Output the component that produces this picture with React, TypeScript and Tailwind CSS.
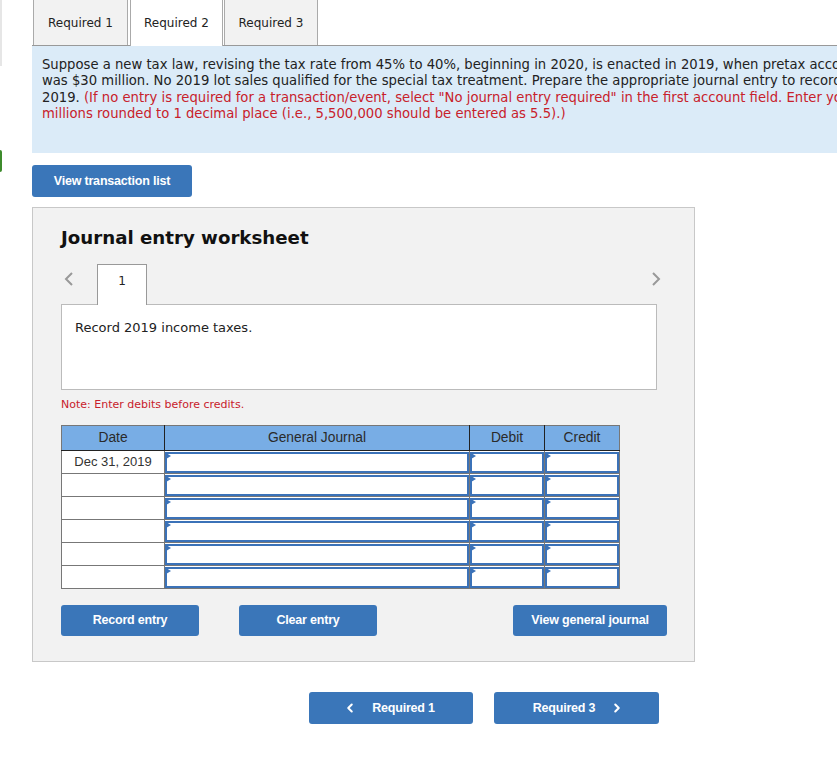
import { ChevronLeft, ChevronRight } from "lucide-react";

const verdana = { fontFamily: '"DejaVu Sans", Verdana, sans-serif' };
const arial = { fontFamily: '"Liberation Sans", Arial, sans-serif' };

function BlueButton({ children, className }: { children: React.ReactNode; className: string }) {
  return (
    <button
      style={arial}
      className={
        "flex items-center justify-center rounded-[3px] bg-[#3a76b9] text-[12.5px] font-bold tracking-[-0.2px] text-white " +
        className
      }
    >
      {children}
    </button>
  );
}

function InputCell() {
  return (
    <td className="h-[23px] border border-[#777] bg-white p-0">
      <div className="relative h-[21px] border-2 border-[#3b72b8] bg-white">
        <span className="absolute left-[-1px] top-[-1px] h-0 w-0 border-y-[3px] border-l-[5px] border-y-transparent border-l-[#3b72b8]" />
      </div>
    </td>
  );
}

export default function App() {
  const rows = ["Dec 31, 2019", "", "", "", "", ""];

  return (
    <div className="flex h-[762px] w-[837px] overflow-hidden bg-white text-[#222]">
      {/* left edge gutter */}
      <div className="flex w-[32px] shrink-0 flex-col">
        <div className="h-[66px] w-[2px] bg-[#e6e6e6]" />
        <div className="mt-[84px] h-[22px] w-[2px] rounded-r bg-[#3d8b2c]" />
      </div>

      <div className="min-w-0 flex-1">
        {/* tabs */}
        <div style={verdana} className="flex h-[46px] w-[900px] border-b border-[#999] text-[12px]">
          <div className="ml-px flex w-[95px] items-center justify-center border-x border-[#aaa] bg-[#f2f2f2]">
            Required 1
          </div>
          <div className="relative z-10 -mb-px ml-[2px] flex w-[93px] items-center justify-center border-x border-[#aaa] bg-white">
            Required 2
          </div>
          <div className="ml-[1px] flex w-[94px] items-center justify-center border-x border-[#aaa] bg-[#f2f2f2]">
            Required 3
          </div>
        </div>

        {/* question */}
        <div
          style={verdana}
          className="h-[107px] w-[900px] whitespace-nowrap bg-[#dbebf8] pl-[10px] pt-[11px] text-[13.2px] leading-[16.3px]"
        >
          <div>
            Suppose a new tax law, revising the tax rate from 45% to 40%, beginning in 2020, is enacted in 2019, when pretax accounting income
          </div>
          <div>
            was $30 million. No 2019 lot sales qualified for the special tax treatment. Prepare the appropriate journal entry to record income taxes in
          </div>
          <div>
            2019.{" "}
            <span className="text-[#c8212b]">
              (If no entry is required for a transaction/event, select "No journal entry required" in the first account field. Enter your answers in
            </span>
          </div>
          <div className="text-[#c8212b]">
            millions rounded to 1 decimal place (i.e., 5,500,000 should be entered as 5.5).)
          </div>
        </div>

        <BlueButton className="mt-[12px] h-[32px] w-[160px]">View transaction list</BlueButton>

        {/* worksheet */}
        <div className="mt-[10px] h-[455px] w-[663px] border border-[#c8c8c8] bg-[#f2f2f2] pl-[28px]">
          <h2 style={verdana} className="pt-[18px] text-[18.2px] font-bold leading-[24px] text-[#111]">
            Journal entry worksheet
          </h2>

          <div className="mt-[14px] flex h-[40px] w-[595px]">
            <svg width="10" height="14" viewBox="0 0 10 14" className="ml-[3px] mt-[8px]">
              <path d="M8 1 L2 7 L8 13" fill="none" stroke="#999" strokeWidth="2" />
            </svg>
            <div
              style={verdana}
              className="relative z-10 ml-[23px] flex h-[41px] w-[50px] items-center justify-center border border-b-0 border-[#999] bg-white pb-[8px] text-[12px]"
            >
              1
            </div>
            <svg width="10" height="14" viewBox="0 0 10 14" className="ml-auto mr-[-5px] mt-[8px]">
              <path d="M2 1 L8 7 L2 13" fill="none" stroke="#999" strokeWidth="2" />
            </svg>
          </div>

          <div
            style={verdana}
            className="h-[86px] w-[596px] border border-[#bbb] bg-white pl-[13px] pt-[15px] text-[13px] leading-[16px]"
          >
            Record 2019 income taxes.
          </div>

          <p style={verdana} className="mt-[7px] text-[11px] leading-[16px] text-[#c8212b]">
            Note: Enter debits before credits.
          </p>

          <table style={arial} className="mt-[12px] border-collapse border border-[#777] text-[13px] text-[#333]">
            <thead>
              <tr className="h-[25px] bg-[#78ade5] text-[13.8px] text-[#2a2a2a]">
                <th className="w-[103px] border-b border-r border-b-[#222] border-r-[#222] font-normal">Date</th>
                <th className="w-[305px] border-b border-r border-b-[#222] border-r-[#222] font-normal">General Journal</th>
                <th className="w-[75px] border-b border-r border-b-[#222] border-r-[#222] font-normal">Debit</th>
                <th className="w-[75px] border-b border-b-[#222] font-normal">Credit</th>
              </tr>
            </thead>
            <tbody>
              {rows.map((date, i) => (
                <tr key={i}>
                  <td className="h-[23px] border border-[#777] bg-white p-0 text-center">{date}</td>
                  <InputCell />
                  <InputCell />
                  <InputCell />
                </tr>
              ))}
            </tbody>
          </table>

          <div className="mt-[16px] flex w-[606px] items-center">
            <BlueButton className="h-[31px] w-[138px]">Record entry</BlueButton>
            <BlueButton className="ml-[40px] h-[31px] w-[138px]">Clear entry</BlueButton>
            <BlueButton className="ml-auto h-[31px] w-[154px]">View general journal</BlueButton>
          </div>
        </div>

        {/* bottom navigation */}
        <div className="mt-[30px] flex pl-[277px]">
          <BlueButton className="h-[32px] w-[164px] gap-[15px] pr-[4px]">
            <ChevronLeft size={14} strokeWidth={3.5} />
            Required 1
          </BlueButton>
          <BlueButton className="ml-[21px] h-[32px] w-[165px] gap-[15px] pl-[4px]">
            Required 3
            <ChevronRight size={14} strokeWidth={3.5} />
          </BlueButton>
        </div>
      </div>
    </div>
  );
}
